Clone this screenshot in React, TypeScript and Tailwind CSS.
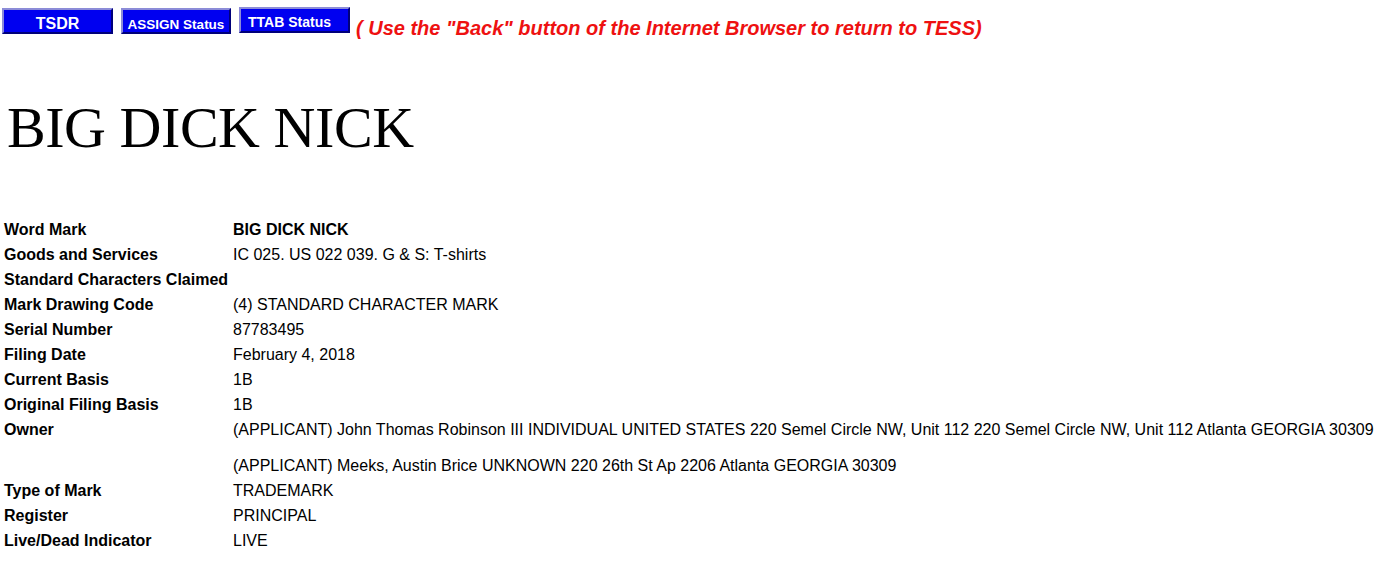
const rows: { label: string; value: React.ReactNode; bold?: boolean; tall?: boolean }[] = [
  { label: "Word Mark", value: "BIG DICK NICK", bold: true },
  { label: "Goods and Services", value: "IC 025. US 022 039. G & S: T-shirts" },
  { label: "Standard Characters Claimed", value: "" },
  { label: "Mark Drawing Code", value: "(4) STANDARD CHARACTER MARK" },
  { label: "Serial Number", value: "87783495" },
  { label: "Filing Date", value: "February 4, 2018" },
  { label: "Current Basis", value: "1B" },
  { label: "Original Filing Basis", value: "1B" },
  {
    label: "Owner",
    tall: true,
    value: (
      <>
        <div className="h-[36px]">
          (APPLICANT) John Thomas Robinson III INDIVIDUAL UNITED STATES 220 Semel Circle NW, Unit 112 220 Semel
          Circle NW, Unit 112 Atlanta GEORGIA 30309
        </div>
        <div>(APPLICANT) Meeks, Austin Brice UNKNOWN 220 26th St Ap 2206 Atlanta GEORGIA 30309</div>
      </>
    ),
  },
  { label: "Type of Mark", value: "TRADEMARK" },
  { label: "Register", value: "PRINCIPAL" },
  { label: "Live/Dead Indicator", value: "LIVE" },
];

function NavButton({ label, className }: { label: string; className: string }) {
  return (
    <div
      className={`h-[26px] bg-[#0000f0] border-t-2 border-l-2 border-t-[#8c8cd8] border-l-[#8c8cd8] border-b-2 border-r-2 border-b-[#00007a] border-r-[#00007a] flex justify-center text-white font-bold leading-none ${className}`}
    >
      {label}
    </div>
  );
}

export default function App() {
  return (
    <div className="w-[1375px] h-[565px] bg-white text-black overflow-hidden font-['Liberation_Sans',Arial,sans-serif]">
      <div className="flex items-start h-[28px] mt-[8px] pl-[2px] gap-[8px]">
        <NavButton label="TSDR" className="w-[111px] pt-[6px] text-[16px]" />
        <NavButton label="ASSIGN Status" className="w-[110px] pt-[8px] text-[13.5px]" />
        <div className="-mt-[1px]">
          <NavButton label="TTAB Status" className="w-[111px] pt-[6px] pr-[10px] text-[14px]" />
        </div>
        <span className="text-[#ee1111] italic font-bold text-[20px] leading-none mt-[10px] -ml-[2px] whitespace-nowrap">
          ( Use the "Back" button of the Internet Browser to return to TESS)
        </span>
      </div>

      <h1 className="font-['Liberation_Serif','Times_New_Roman',serif] text-[58px] leading-none pl-[7px] mt-[63px] tracking-[-0.45px]">
        BIG DICK NICK
      </h1>

      <div className="mt-[64px] pl-[4px] text-[16px] leading-[18px]">
        {rows.map((r) => (
          <div key={r.label} className={`flex ${r.tall ? "h-[61px]" : "h-[25px]"}`}>
            <div className="w-[229px] shrink-0 font-bold whitespace-nowrap">{r.label}</div>
            <div className={`whitespace-nowrap ${r.bold ? "font-bold" : ""}`}>{r.value}</div>
          </div>
        ))}
      </div>
    </div>
  );
}
